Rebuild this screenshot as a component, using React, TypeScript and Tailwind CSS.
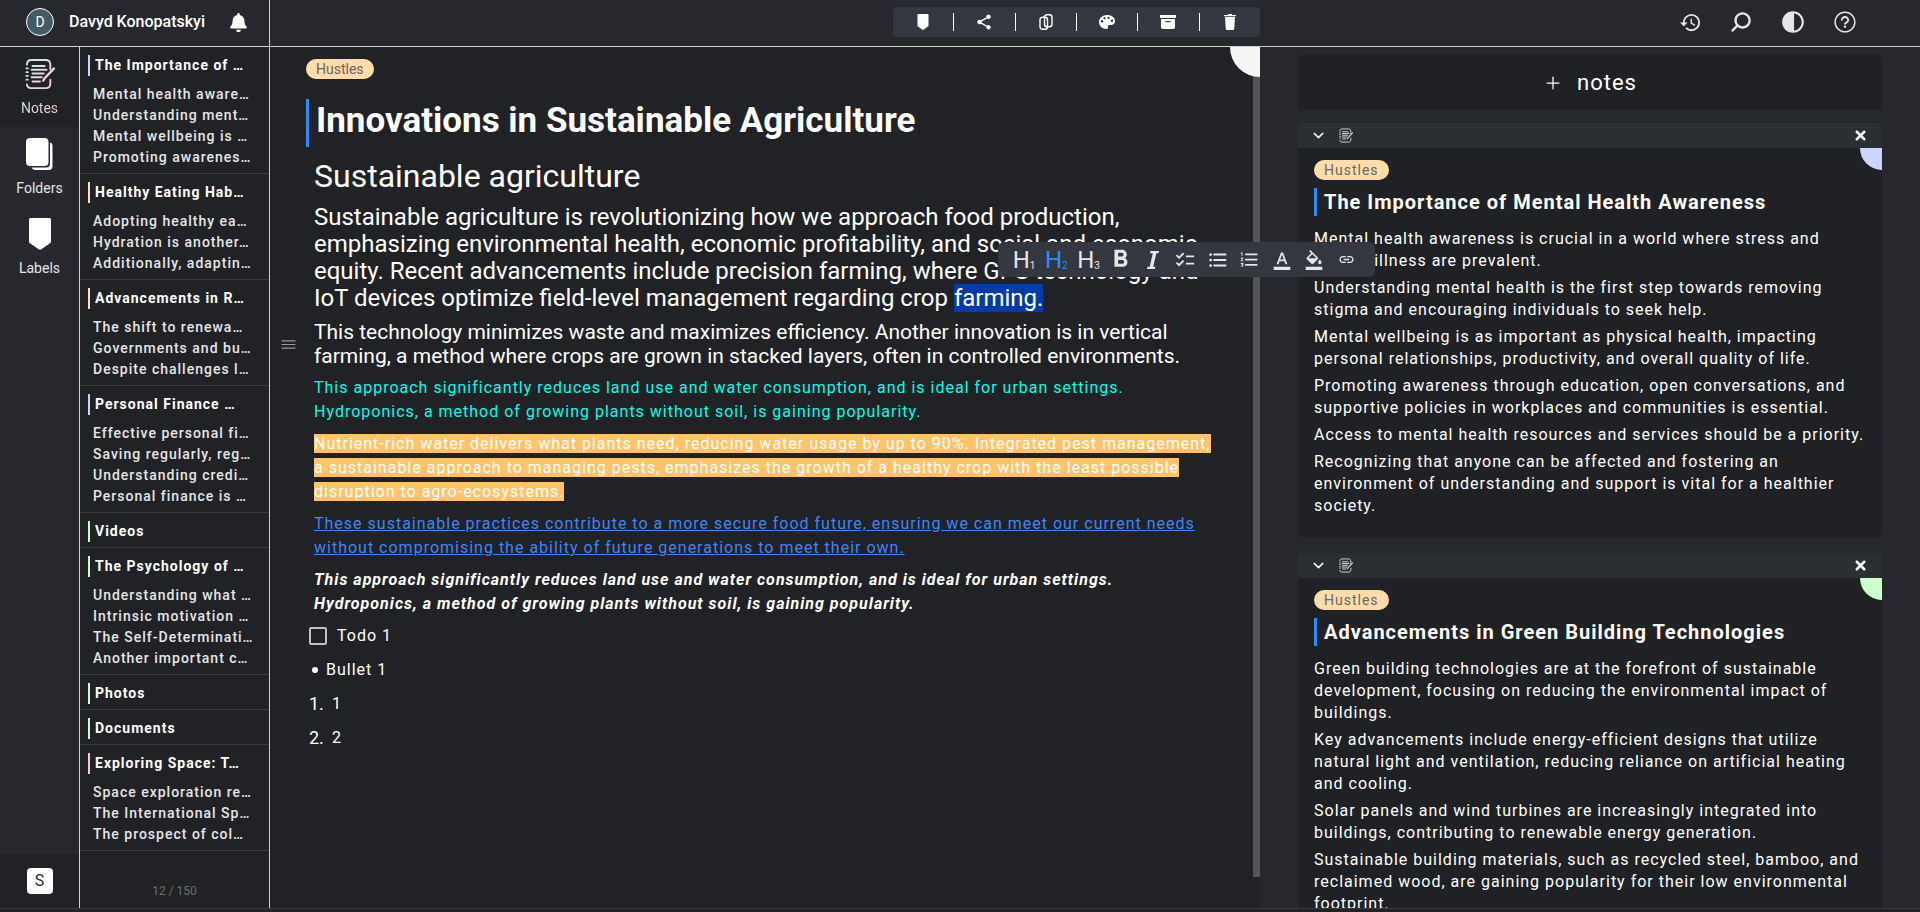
import React from 'react';
import { FaBell } from 'react-icons/fa';
import {
  MdShare, MdHistory, MdContrast, MdChecklist, MdFormatListBulleted, MdFormatListNumbered,
  MdFormatColorText, MdFormatColorFill, MdFormatBold, MdLink,
} from 'react-icons/md';
import { IoMenuOutline, IoSearch } from 'react-icons/io5';
import { RxQuestionMarkCircled } from 'react-icons/rx';
import { ChevronDown, Plus, X } from 'lucide-react';

interface NoteItem {
  title: string;
  color: 'blue' | 'peach' | 'green' | 'pink';
  lines: string[];
}

const noteItems: NoteItem[] = [
  {
    title: 'The Importance of …',
    color: 'blue',
    lines: ['Mental health aware…', 'Understanding ment…', 'Mental wellbeing is …', 'Promoting awarenes…'],
  },
  {
    title: 'Healthy Eating Hab…',
    color: 'peach',
    lines: ['Adopting healthy ea…', 'Hydration is another…', 'Additionally, adaptin…'],
  },
  {
    title: 'Advancements in R…',
    color: 'peach',
    lines: ['The shift to renewa…', 'Governments and bu…', 'Despite challenges l…'],
  },
  {
    title: 'Personal Finance …',
    color: 'blue',
    lines: ['Effective personal fi…', 'Saving regularly, reg…', 'Understanding credi…', 'Personal finance is …'],
  },
  { title: 'Videos', color: 'green', lines: [] },
  {
    title: 'The Psychology of …',
    color: 'green',
    lines: ['Understanding what …', 'Intrinsic motivation …', 'The Self-Determinati…', 'Another important c…'],
  },
  { title: 'Photos', color: 'green', lines: [] },
  { title: 'Documents', color: 'green', lines: [] },
  {
    title: 'Exploring Space: T…',
    color: 'pink',
    lines: ['Space exploration re…', 'The International Sp…', 'The prospect of col…'],
  },
];

const barColors = {
  blue: 'border-[#ccd5ff]',
  peach: 'border-[#ffe2bd]',
  green: 'border-[#ccffcc]',
  pink: 'border-[#ffc8c8]',
};

const sideNotes = [
  {
    title: 'The Importance of Mental Health Awareness',
    corner: 'bg-[#ccd5ff]',
    paragraphs: [
      'Mental health awareness is crucial in a world where stress and mental illness are prevalent.',
      'Understanding mental health is the first step towards removing stigma and encouraging individuals to seek help.',
      'Mental wellbeing is as important as physical health, impacting personal relationships, productivity, and overall quality of life.',
      'Promoting awareness through education, open conversations, and supportive policies in workplaces and communities is essential.',
      'Access to mental health resources and services should be a priority.',
      'Recognizing that anyone can be affected and fostering an environment of understanding and support is vital for a healthier society.',
    ],
  },
  {
    title: 'Advancements in Green Building Technologies',
    corner: 'bg-[#ccffcc]',
    paragraphs: [
      'Green building technologies are at the forefront of sustainable development, focusing on reducing the environmental impact of buildings.',
      'Key advancements include energy-efficient designs that utilize natural light and ventilation, reducing reliance on artificial heating and cooling.',
      'Solar panels and wind turbines are increasingly integrated into buildings, contributing to renewable energy generation.',
      'Sustainable building materials, such as recycled steel, bamboo, and reclaimed wood, are gaining popularity for their low environmental footprint.',
    ],
  },
];

const NotesIcon: React.FC<{ className?: string; gradient?: boolean }> = ({ className, gradient }) => (
  <svg viewBox="0 0 32 34" fill="none" stroke={gradient ? 'url(#noteGradient)' : 'currentColor'} strokeWidth="2" strokeLinecap="round" className={className}>
    {gradient && (
      <defs>
        <linearGradient id="noteGradient" x1="0" y1="0" x2="32" y2="34" gradientUnits="userSpaceOnUse">
          <stop offset="0.1" stopColor="#cfe6f5" />
          <stop offset="0.9" stopColor="#f5c9c9" />
        </linearGradient>
      </defs>
    )}
    <path d="M2 7 C2 3 4 2 7 2 H22 C25 2 27 4 27 7 V12 M27 23 V27 C27 30 25 32 22 32 H7 C4 32 2 31 2 28" />
    <path d="M1.500 11h1.500 M1.500 15h1.500 M1.500 19h1.500 M1.500 23h1.500" />
    <path d="M8 8.500h13 M7 12.500h16 M8 16.500h12 M7 20.500h11 M8 25h8" />
    <path d="M31 11 L21 21.500 L19.500 24" strokeWidth="2.500" />
  </svg>
);

const LabelIcon: React.FC<{ className?: string }> = ({ className }) => (
  <svg viewBox="0 0 22 32" fill="currentColor" className={className}>
    <path d="M1.500 0h19A1.500 1.500 0 0 1 22 1.500v22a2 2 0 0 1-1 1.700L12 31.400a2 2 0 0 1-2 0L1 25.200a2 2 0 0 1-1-1.700v-22A1.500 1.500 0 0 1 1.500 0z" />
  </svg>
);

const FoldersIcon: React.FC<{ className?: string }> = ({ className }) => (
  <svg viewBox="0 0 27 32" fill="currentColor" className={className}>
    <path d="M24 4.500a3 3 0 0 1 2.500 3V28a4 4 0 0 1-4 4H9a4 4 0 0 1-3.500-2.500H20a4 4 0 0 0 4-4z" />
    <rect width="22.500" height="28" rx="4" />
  </svg>
);

const CopyIcon: React.FC<{ className?: string }> = ({ className }) => (
  <svg viewBox="0 0 14 16" fill="none" stroke="currentColor" strokeWidth="1.400" className={className}>
    <rect x="5.500" y="0.800" width="7.500" height="12" rx="2.500" />
    <rect x="1" y="3.200" width="7.500" height="12" rx="2.500" />
  </svg>
);

const PaletteIcon: React.FC<{ className?: string }> = ({ className }) => (
  <svg viewBox="0 0 16 14" fill="currentColor" className={className}>
    <path d="M8 0C3.600 0 0 3 0 7s3.500 7 7.500 7c1.300 0 1.800-.8 1.500-1.900-.3-1.300.2-2.200 1.600-2.200h2c2 0 3.400-1.500 3.400-3.800C16 2.500 12.500 0 8 0z" />
    <g fill="#34373f">
      <circle cx="3" cy="6.300" r="1.200" />
      <circle cx="5.500" cy="3.200" r="1.100" />
      <circle cx="9.600" cy="2.900" r="1.100" />
      <circle cx="13" cy="5.800" r="1.200" />
    </g>
  </svg>
);

const ArchiveIcon: React.FC<{ className?: string }> = ({ className }) => (
  <svg viewBox="0 0 16 14" fill="currentColor" className={className}>
    <rect width="16" height="3" rx="0.500" />
    <path fillRule="evenodd" d="M1 4h14v8a2 2 0 0 1-2 2H3a2 2 0 0 1-2-2zM5.500 6v1.200h5V6z" />
  </svg>
);

const TrashIcon: React.FC<{ className?: string }> = ({ className }) => (
  <svg viewBox="0 0 12 16" fill="currentColor" className={className}>
    <path d="M0 1h3.500l.8-1h3.400l.8 1H12v1.200H0zM1 3h10l-.7 11.500A1.500 1.500 0 0 1 8.800 16H3.200a1.500 1.500 0 0 1-1.500-1.500z" />
  </svg>
);

const ItalicIcon: React.FC<{ className?: string }> = ({ className }) => (
  <svg viewBox="0 0 12 18" fill="currentColor" className={className}>
    <path d="M3.500 0H12l-.5 2.200H9.300L6.200 15.800h2.200L7.900 18H0l.5-2.200h2.200L5.800 2.200H3z" />
  </svg>
);

const Heading: React.FC<{ level: number }> = ({ level }) => (
  <span className="flex items-end">
    <span className="text-2xl leading-6">H</span>
    <span className="text-[10px] leading-3">{level}</span>
  </span>
);

const noteActions = [
  { name: 'Label', icon: <LabelIcon className="h-4 w-3" /> },
  { name: 'Share', icon: <MdShare size={18} /> },
  { name: 'Copy', icon: <CopyIcon className="h-4 w-[14px]" /> },
  { name: 'Color', icon: <PaletteIcon className="h-[14px] w-4" /> },
  { name: 'Archive', icon: <ArchiveIcon className="h-[14px] w-4" /> },
  { name: 'Delete', icon: <TrashIcon className="h-4 w-3" /> },
];

const headerActions = [
  { name: 'History', icon: <MdHistory size={23} /> },
  { name: 'Search', icon: <IoSearch size={24} className="-scale-x-100" /> },
  { name: 'Theme', icon: <MdContrast size={26} /> },
  { name: 'Help', icon: <RxQuestionMarkCircled size={24} /> },
];

const formatActions = [
  { name: 'Heading 1', icon: <Heading level={1} /> },
  { name: 'Heading 2', icon: <Heading level={2} />, active: true },
  { name: 'Heading 3', icon: <Heading level={3} /> },
  { name: 'Bold', icon: <MdFormatBold size={29} /> },
  { name: 'Italic', icon: <ItalicIcon className="h-[18px] w-3" /> },
  { name: 'Checklist', icon: <MdChecklist size={22} /> },
  { name: 'Bulleted list', icon: <MdFormatListBulleted size={22} /> },
  { name: 'Numbered list', icon: <MdFormatListNumbered size={21} /> },
  { name: 'Text color', icon: <MdFormatColorText size={20} /> },
  { name: 'Fill color', icon: <MdFormatColorFill size={20} /> },
  { name: 'Link', icon: <MdLink size={17} /> },
];

const Header: React.FC = () => (
  <header className="flex h-[47px] shrink-0 border-b border-[#d0d0d0] bg-[#27282d]">
    <div className="flex w-[270px] shrink-0 items-center border-r border-[#d0d0d0] pb-[2px] pl-[26px]">
      <span className="flex size-7 items-center justify-center rounded-full border border-white bg-[#455a64] text-sm">D</span>
      <span className="ml-[15px] text-base font-medium">Davyd Konopatskyi</span>
      <button aria-label="Notifications" className="ml-6">
        <FaBell size={19} />
      </button>
    </div>
    <div className="grid flex-1 grid-cols-[3fr_2fr] items-center pb-[2px]">
      <div className="flex h-[30px] w-[367px] items-center divide-x divide-white justify-self-end rounded bg-[#34373f]">
        {noteActions.map(a => (
          <button key={a.name} aria-label={a.name} className="flex h-[18px] flex-1 items-center justify-center">
            {a.icon}
          </button>
        ))}
      </div>
      <div className="flex items-center justify-end gap-[27px] pr-[63px] text-[#e6e6e6]">
        {headerActions.map(a => (
          <button key={a.name} aria-label={a.name}>{a.icon}</button>
        ))}
      </div>
    </div>
  </header>
);

const Rail: React.FC = () => (
  <nav className="flex w-20 shrink-0 flex-col border-r border-[#d0d0d0] bg-[#27282d] text-sm text-[#e6e6e6]">
    <a href="#notes" className="flex h-20 flex-col items-center gap-2 bg-[#212226] pt-[11px]">
      <NotesIcon gradient className="h-8 w-[30px]" />
      <span className="bg-linear-to-r from-[#cfe6f5] to-[#f5c9c9] bg-clip-text text-transparent">Notes</span>
    </a>
    <a href="#folders" className="flex h-20 flex-col items-center gap-2 pt-[11px]">
      <FoldersIcon className="h-8 w-[27px] text-white" />
      Folders
    </a>
    <a href="#labels" className="flex h-20 flex-col items-center gap-2 pt-[11px]">
      <LabelIcon className="h-8 w-[22px] text-white" />
      Labels
    </a>
    <div className="mt-auto flex h-[54px] items-center justify-center bg-[#212226]">
      <button className="size-[26px] rounded bg-white text-base leading-none text-[#27282d]">S</button>
    </div>
  </nav>
);

const NoteList: React.FC = () => (
  <aside className="flex w-[190px] shrink-0 flex-col border-r border-[#d0d0d0] text-sm leading-[21px] tracking-[1px]">
    {noteItems.map(item => (
      <div key={item.title} className="border-b border-[#3a3b3f] pt-2 pb-[5px] pl-2 whitespace-nowrap">
        <h3 className={`border-l-2 pl-[5px] font-bold ${barColors[item.color]}`}>{item.title}</h3>
        {item.lines.length > 0 && (
          <div className="pt-2 pl-[5px] font-medium text-[#e6e6e6]">
            {item.lines.map(line => <p key={line}>{line}</p>)}
          </div>
        )}
      </div>
    ))}
    <p className="mt-auto pb-[6px] text-center text-xs leading-[21px] tracking-normal text-[#6f6f6f]">12 / 150</p>
  </aside>
);

const FormatBar: React.FC = () => (
  <span role="toolbar" className="absolute bottom-[35px] left-11 z-10 flex h-[35px] w-[377px] items-center justify-around rounded-md bg-[#34373f] pr-3 pl-[10px] text-[#e6e6e6]">
    {formatActions.map(a => (
      <button key={a.name} aria-label={a.name} className={`flex w-8 items-center justify-center ${a.active ? 'text-[#2990fb]' : ''}`}>
        {a.icon}
      </button>
    ))}
  </span>
);

const Editor: React.FC = () => (
  <main className="relative flex min-w-0">
    <div className="min-w-0 flex-1 pt-3 pr-8 pl-9">
      <span className="block w-fit rounded-full bg-[#ffddaa] px-[10px] text-sm leading-5 text-[#666666]">Hustles</span>
      <h1 className="mt-5 border-l-[3px] border-[#2990fb] pb-1 pl-[7px] text-[35px] leading-[44px] font-bold">
        Innovations in Sustainable Agriculture
      </h1>
      <div className="pl-2">
        <h2 className="mt-[10px] text-[32px] leading-[38px]">Sustainable agriculture</h2>
        <p className="mt-[9px] text-2xl leading-[27px]">
          Sustainable agriculture is revolutionizing how we approach food production, emphasizing environmental health,
          economic profitability, and social and economic equity. Recent advancements include precision farming, where GPS
          technology and IoT devices optimize field-level management regarding crop{' '}
          <span className="relative bg-[#053ba8]">
            farming.
            <FormatBar />
          </span>
        </p>
        <div className="relative">
          <button aria-label="Drag block" className="absolute top-[15px] -left-[35px] text-[#9a9a9a]">
            <IoMenuOutline size={19} />
          </button>
          <p className="mt-2 text-[21px] leading-6">
            This technology minimizes waste and maximizes efficiency. Another innovation is in vertical farming, a method
            where crops are grown in stacked layers, often in controlled environments.
          </p>
        </div>
        <div className="mt-2 flex flex-col gap-2 text-base leading-6 tracking-[1px]">
          <p className="text-[#00ffe6]">
            This approach significantly reduces land use and water consumption, and is ideal for urban settings.
            Hydroponics, a method of growing plants without soil, is gaining popularity.
          </p>
          <p>
            <mark className="bg-[#ffc46b] text-white">
              Nutrient-rich water delivers what plants need, reducing water usage by up to 90%. Integrated pest management,
              a sustainable approach to managing pests, emphasizes the growth of a healthy crop with the least possible
              disruption to agro-ecosystems.
            </mark>
          </p>
          <p>
            <a href="#practices" className="text-[#4285f4] underline">
              These sustainable practices contribute to a more secure food future, ensuring we can meet our current needs
              without compromising the ability of future generations to meet their own.
            </a>
          </p>
          <p className="font-bold italic">
            This approach significantly reduces land use and water consumption, and is ideal for urban settings.
            Hydroponics, a method of growing plants without soil, is gaining popularity.
          </p>
        </div>
      </div>
      <div className="mt-2 flex flex-col gap-[10px] pl-[3px] text-base leading-6 tracking-[1px]">
        <label className="flex items-center gap-[10px]">
          <input type="checkbox" className="size-[18px] appearance-none rounded-xs border-2 border-[#c0c0c0]" />
          Todo 1
        </label>
        <ul>
          <li className="flex items-center gap-2 pl-[3px]">
            <span className="size-[6px] rounded-full bg-white" />
            Bullet 1
          </li>
        </ul>
        <ol className="flex flex-col gap-[10px]">
          <li className="flex gap-2"><span className="text-lg leading-6 tracking-normal">1.</span>1</li>
          <li className="flex gap-2"><span className="text-lg leading-6 tracking-normal">2.</span>2</li>
        </ol>
      </div>
    </div>
    <div className="mb-[31px] w-[7px] bg-[#555555]" />
    <div className="absolute top-0 right-0 size-[30px] rounded-bl-full bg-[#f5f5f5]" />
  </main>
);

const SidePanel: React.FC = () => (
  <section className="min-w-0 overflow-hidden bg-[#27282d] px-[38px] pt-2 tracking-[1px]">
    <button className="flex h-[55px] w-full items-center justify-center gap-[14px] rounded bg-[#202124] text-[22px]">
      <Plus size={20} strokeWidth={1.500} />
      notes
    </button>
    <div className="mt-[13px] flex flex-col gap-4">
      {sideNotes.map(note => (
        <article key={note.title} className="overflow-hidden rounded bg-[#202124]">
          <div className="flex h-[25px] items-center bg-[#2b2e32] pr-[14px] pl-3">
            <button aria-label="Collapse"><ChevronDown size={17} /></button>
            <NotesIcon className="ml-3 h-[15px] w-[14px] text-[#e6e6e6]" />
            <button aria-label="Close" className="ml-auto"><X size={15} strokeWidth={4} /></button>
          </div>
          <div className="relative px-4 pt-3 pb-5">
            <div className={`absolute top-0 right-0 size-[22px] rounded-bl-full ${note.corner}`} />
            <span className="block w-fit rounded-full bg-[#ffddaa] px-[10px] text-sm leading-5 text-[#666666]">Hustles</span>
            <h2 className="mt-2 border-l-[3px] border-[#2990fb] pl-[7px] text-xl leading-7 font-bold">{note.title}</h2>
            <div className="mt-3 flex flex-col gap-[5px] text-base leading-[22px]">
              {note.paragraphs.map(p => <p key={p}>{p}</p>)}
            </div>
          </div>
        </article>
      ))}
    </div>
  </section>
);

const App: React.FC = () => (
  <div className="flex h-screen flex-col overflow-hidden bg-[#212226] font-['Roboto',sans-serif] text-white">
    <Header />
    <div className="flex min-h-0 flex-1">
      <Rail />
      <NoteList />
      <div className="grid min-w-0 flex-1 grid-cols-[3fr_2fr] grid-rows-[minmax(0,1fr)]">
        <Editor />
        <SidePanel />
      </div>
    </div>
    <div className="h-1 shrink-0 border-t border-[#3a3b3f] bg-[#222222]" />
  </div>
);

export default App;
